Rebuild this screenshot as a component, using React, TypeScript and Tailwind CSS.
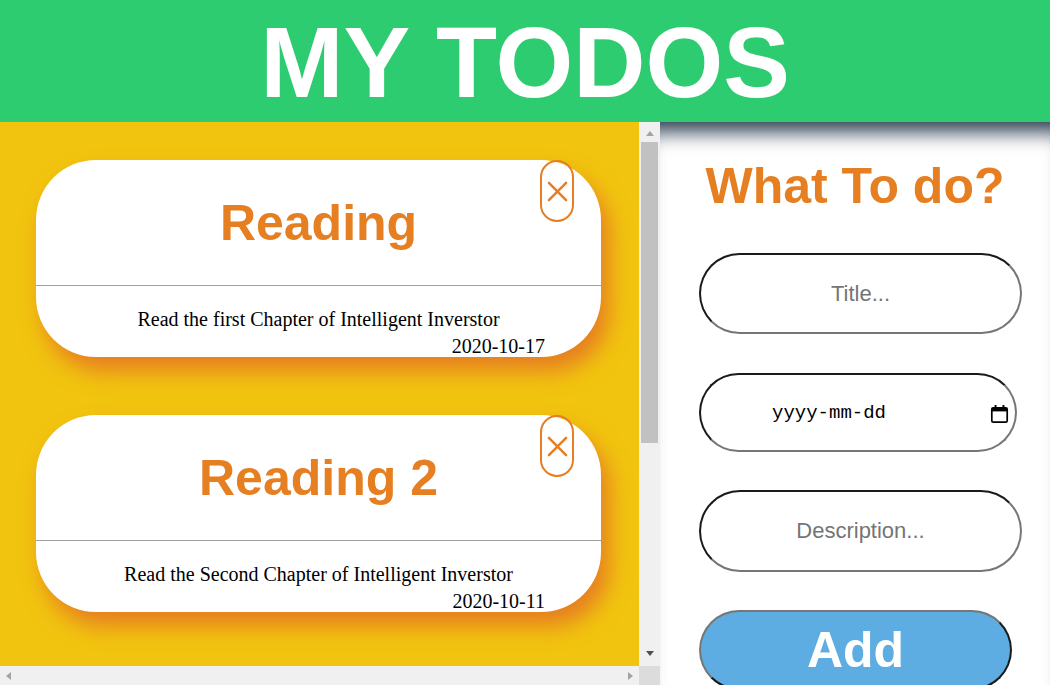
import React from 'react';

// ============================================================================
// MY TODOS - list + add form
// ============================================================================

interface Todo {
  title: string;
  description: string;
  date: string;
}

const todos: Todo[] = [
  { title: 'Reading', description: 'Read the first Chapter of Intelligent Inverstor', date: '2020-10-17' },
  { title: 'Reading 2', description: 'Read the Second Chapter of Intelligent Inverstor', date: '2020-10-11' },
];

const CloseIcon = () => (
  <svg width="21" height="21" viewBox="0 0 22 22" fill="none">
    <path d="M2 2L20 20M20 2L2 20" stroke="#e67e22" strokeWidth="2.6" strokeLinecap="round" />
  </svg>
);

const CalendarIcon = () => (
  <svg width="19" height="20" viewBox="0 0 19 20" fill="none">
    <rect x="1.8" y="3.8" width="15.4" height="14.4" rx="1.5" stroke="#000" strokeWidth="1.7" />
    <rect x="1.8" y="3.8" width="15.4" height="3.6" fill="#000" />
    <rect x="4.6" y="1" width="1.9" height="3.5" fill="#000" />
    <rect x="12.5" y="1" width="1.9" height="3.5" fill="#000" />
  </svg>
);

const TodoCard: React.FC<{ todo: Todo }> = ({ todo }) => (
  <div className="relative ml-[36px] h-[197px] w-[565px] shrink-0 rounded-[60px] bg-white shadow-[8px_14px_22px_#e67e22]">
    <button className="absolute right-[27px] top-0 flex h-[62px] w-[34px] items-center justify-center rounded-full border-2 border-[#e67e22] bg-transparent">
      <CloseIcon />
    </button>
    <div className="flex h-[125px] items-center justify-center">
      <h2 className="text-[50px] font-bold leading-none text-[#e67e22]">{todo.title}</h2>
    </div>
    <div className="h-px bg-[#a0a0a0]" />
    <p className="pt-[21px] text-center font-['Liberation_Serif','Times_New_Roman',serif] text-[20px] leading-[24px] text-black">
      {todo.description}
    </p>
    <p className="mt-[3px] pr-[56px] text-right font-['Liberation_Serif','Times_New_Roman',serif] text-[20px] leading-[24px] text-black">
      {todo.date}
    </p>
  </div>
);

const Arrow = ({ dir, color }: { dir: 'up' | 'down' | 'left' | 'right'; color: string }) => {
  const d = {
    up: 'M0 5L4 0L8 5Z',
    down: 'M0 0L8 0L4 5Z',
    left: 'M5 0L5 8L0 4Z',
    right: 'M0 0L5 4L0 8Z',
  }[dir];
  const vertical = dir === 'up' || dir === 'down';
  return (
    <svg width={vertical ? 8 : 5} height={vertical ? 5 : 8} viewBox={vertical ? '0 0 8 5' : '0 0 5 8'}>
      <path d={d} fill={color} />
    </svg>
  );
};

export default function App() {
  return (
    <div className="flex h-[685px] w-[1050px] flex-col overflow-hidden bg-white font-['Liberation_Sans',Arial,sans-serif]">
      {/* Header */}
      <header className="flex h-[122px] shrink-0 items-center justify-center bg-[#2ecc71] pt-[2px]">
        <h1 className="text-[100px] font-bold leading-none text-white">MY TODOS</h1>
      </header>

      <div className="flex h-[563px]">
        {/* Todo list with scrollbars */}
        <div className="flex w-[660px] flex-col">
          <div className="flex h-[544px]">
            <div className="flex w-[639px] flex-col gap-[58px] overflow-hidden bg-[#f1c40f] pt-[38px]">
              {todos.map((todo) => (
                <TodoCard key={todo.title} todo={todo} />
              ))}
            </div>
            <div className="flex w-[21px] flex-col bg-[#f0f0f0]">
              <div className="flex h-[20px] items-center justify-center pt-[2px]">
                <Arrow dir="up" color="#a3a3a3" />
              </div>
              <div className="mx-[2px] h-[301px] bg-[#c1c1c1]" />
              <div className="flex-1" />
              <div className="flex h-[26px] items-center justify-center">
                <Arrow dir="down" color="#505050" />
              </div>
            </div>
          </div>
          <div className="flex h-[19px]">
            <div className="flex w-[639px] items-center justify-between bg-[#f0f0f0] px-[6px]">
              <Arrow dir="left" color="#a3a3a3" />
              <Arrow dir="right" color="#a3a3a3" />
            </div>
            <div className="w-[21px] bg-[#dcdcdc]" />
          </div>
        </div>

        {/* Add form */}
        <div className="flex w-[390px] flex-col bg-white shadow-[inset_0_26px_20px_-16px_#2c3e50]">
          <h2 className="mt-[39px] text-center text-[50px] font-bold leading-none text-[#e67e22]">What To do?</h2>
          <div className="ml-[39px] mt-[42px] flex flex-col">
            <input
              placeholder="Title..."
              className="h-[81px] w-[323px] rounded-full border-2 border-b-[#767676] border-l-[#1a1a1a] border-r-[#767676] border-t-[#1a1a1a] bg-white text-center text-[22px] text-black outline-none placeholder:text-[#757575]"
            />
            <div className="mt-[39px] flex h-[79px] w-[318px] items-center justify-between rounded-full border-2 border-b-[#767676] border-l-[#1a1a1a] border-r-[#767676] border-t-[#1a1a1a] pl-[71px] pr-[6px] pt-[2px]">
              <span className="font-['Liberation_Mono','Courier_New',monospace] text-[19px] text-black">yyyy-mm-dd</span>
              <CalendarIcon />
            </div>
            <input
              placeholder="Description..."
              className="mt-[38px] h-[82px] w-[323px] rounded-full border-2 border-b-[#767676] border-l-[#1a1a1a] border-r-[#767676] border-t-[#1a1a1a] bg-white text-center text-[22px] text-black outline-none placeholder:text-[#757575]"
            />
            <button className="mt-[38px] h-[80px] w-[313px] shrink-0 rounded-full border-2 border-b-[#1a1a1a] border-l-[#767676] border-r-[#1a1a1a] border-t-[#767676] bg-[#5dade2] text-[50px] font-bold leading-none text-white">
              Add
            </button>
          </div>
        </div>
      </div>
    </div>
  );
}
